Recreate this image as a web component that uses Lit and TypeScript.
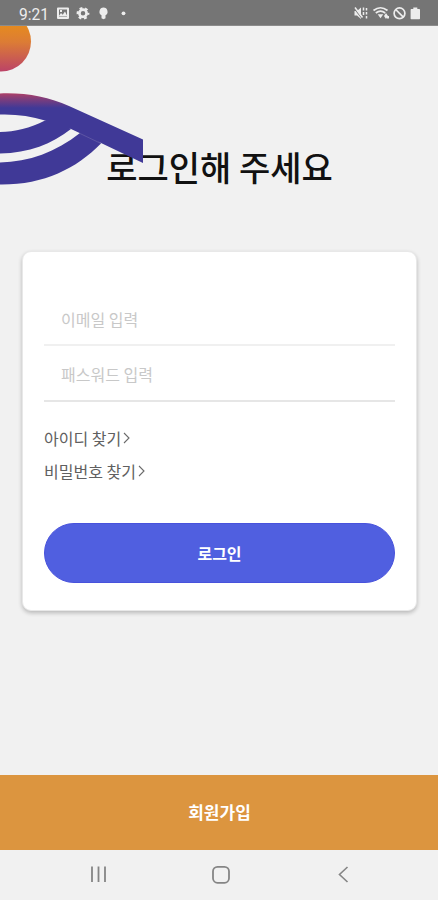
import { LitElement, html, css } from "lit";
import { customElement } from "lit/decorators.js";

@customElement("app-root")
export class AppRoot extends LitElement {
  static styles = css`
    :host {
      display: flex;
      flex-direction: column;
      position: relative;
      height: 900px;
      overflow: hidden;
      background: #f1f1f1;
      font-family: "Noto Sans CJK KR", "Noto Sans", sans-serif;
      color: #111;
    }
    * { box-sizing: border-box; }
    svg { display: block; }
    .status {
      height: 26px;
      flex: none;
      background: #757575;
      border-bottom: 1px solid #8c8c8c;
    }
    .art {
      position: absolute;
      left: 0;
      top: 26px;
      pointer-events: none;
    }
    .clock { font: 16.5px Roboto, sans-serif; }
    main { flex: 1; padding: 117px 21px 0 22px; }
    h1 {
      margin: 0;
      height: 48px;
      line-height: 48px;
      font-size: 34px;
      font-weight: 500;
      text-align: center;
      white-space: nowrap;
    }
    .card {
      margin-top: 60px;
      height: 360px;
      padding: 44px 21px 0 21px;
      background: #fff;
      border-radius: 9px;
      border: 1px solid #e8e8e8;
      box-shadow: 0 2px 4px rgba(0, 0, 0, 0.24);
    }
    .field {
      height: 50px;
      padding: 0 17px;
      line-height: 46px;
      font-size: 16px;
      font-weight: 400;
      color: #c8c8c8;
      border-bottom: 2px solid #f0f0f0;
    }
    .field + .field { height: 56px; line-height: 56px; border-bottom-color: #e6e6e6; }
    .links { padding-top: 19px; font-size: 16px; font-weight: 400; color: #606060; }
    .link { display: flex; align-items: center; height: 33px; }
    .link svg { margin-left: 2px; }
    .login {
      margin-top: 36px;
      height: 60px;
      display: flex;
      align-items: center;
      justify-content: center;
      border-radius: 30px;
      background: #505fe0;
      border: 1px solid #4852dc;
      color: #fff;
      font-size: 16px;
      font-weight: 700;
    }
    .join {
      flex: none;
      height: 75px;
      padding: 0 0 2px 1px;
      display: flex;
      align-items: center;
      justify-content: center;
      background: #dc953f;
      color: #fff;
      font-size: 17px;
      font-weight: 700;
    }
    .nav { flex: none; height: 50px; }
  `;

  private link(text: string) {
    return html`<div class="link"><span>${text}</span>
      <svg width="8" height="14" viewBox="0 0 8 14" fill="none" stroke="#6a6a6a" stroke-width="1.1"><path d="M1 2 6 7 1 12" /></svg></div>`;
  }

  render() {
    return html`
      <div class="status">
        <svg width="438" height="25" viewBox="0 0 438 25" fill="#ededed">
          <text class="clock" x="19" y="19.5" textLength="30" lengthAdjust="spacingAndGlyphs">9:21</text>
          <path fill-rule="evenodd" d="M58 7.500h10q1 0 1 1v9.500q0 1-1 1H58q-1 0-1-1V8.500q0-1 1-1Zm1 2v7.500h8V9.500Z" />
          <path d="m58.500 16.500 2.500-3.500 1.700 1.800 2.300-3.300 2.500 5ZM60 10h2v2h-2Z" />
          <circle cx="83" cy="13.300" r="3.600" fill="none" stroke="#ededed" stroke-width="2.700" />
          <circle cx="83" cy="13.300" r="5.300" fill="none" stroke="#ededed" stroke-width="2.200" stroke-dasharray="2.775 2.775" stroke-dashoffset="1.300" />
          <path d="M103.500 7.500a4.200 4.200 0 0 1 2 7.800v2.900l-2 1-2-1v-2.900a4.200 4.200 0 0 1 2-7.800Z" />
          <circle cx="123.500" cy="13.300" r="1.900" />
          <path d="M354.500 11h2.500l4-3.500v11.500l-4-3.500h-2.500Z" />
          <path d="m354 8 8 10.500" stroke="#757575" stroke-width="1.200" />
          <path d="m355 7.500 7.500 10M363.500 7.500v3M363.500 12v3M366.500 8v2.500M366.500 12v2.500M366.500 16v2.500" stroke="#ededed" stroke-width="1.500" />
          <g fill="none" stroke="#ededed" stroke-width="1.700">
            <path d="M373.500 10.500q7-5.500 14 0M375.800 13q4.700-3.600 9.400 0" />
            <circle cx="399.500" cy="13.300" r="5.400" />
            <path d="m395.700 9.500 7.600 7.600" />
          </g>
          <path d="m377.700 14.200 5.600 0-2.800 4ZM384 16l2-3 2 3-2 3ZM387 16h2v2.500h-2Z" />
          <path d="M413.300 7.500h4V9h2q.7 0 .7.800V18.500q0 .8-.7.800h-8q-.7 0-.7-.8V9.800q0-.8.700-.8h2Z" />
        </svg>
      </div>
      <main>
        <h1>로그인해 주세요</h1>
        <section class="card">
          <div class="field">이메일 입력</div>
          <div class="field">패스워드 입력</div>
          <div class="links">${this.link("아이디 찾기")}${this.link("비밀번호 찾기")}</div>
          <div class="login" role="button">로그인</div>
        </section>
      </main>
      <div class="join" role="button">회원가입</div>
      <div class="nav">
        <svg width="438" height="50" viewBox="0 0 438 50" fill="none" stroke="#858585" stroke-width="1.800">
          <path d="M92 16.500v15.500M98.500 16.500v15.500M105 16.500v15.500" />
          <rect x="213" y="16.800" width="16" height="16" rx="4.500" />
          <path d="m347.500 17-8 7.500 8 7.500" stroke-width="1.600" />
        </svg>
      </div>
      <svg class="art" width="160" height="170" viewBox="0 26 160 170">
        <defs>
          <linearGradient id="sun" gradientUnits="userSpaceOnUse" x1="0" y1="26" x2="0" y2="72">
            <stop offset="0" stop-color="#e58a20" />
            <stop offset="0.350" stop-color="#dc7c35" />
            <stop offset="1" stop-color="#bb4268" />
          </linearGradient>
          <linearGradient id="crest" gradientUnits="userSpaceOnUse" x1="0" y1="93" x2="0" y2="108">
            <stop offset="0" stop-color="#b04066" />
            <stop offset="0.350" stop-color="#843d79" />
            <stop offset="1" stop-color="#403997" />
          </linearGradient>
        </defs>
        <circle cx="1" cy="41.500" r="30" fill="url(#sun)" />
        <path fill="#403997" d="M0 132C15 132 30 128 45 120.500L55 119 71 129C52 144 29 153 0 153.500Z" />
        <path fill="#403997" d="M0 162.500C29 162 56 152 80 133L88 132 101 143.500C76 169 43 185 0 184.500Z" />
        <path fill="url(#crest)" d="M0 93.500C26 92.500 48 97 69 106L143 139.500V163L101 143 71 129 45 120.500C31 116 16 114 0 114.500Z" />
        <path d="m80 133.500 21 10" stroke="#6960a9" stroke-width="0.700" />
      </svg>
    `;
  }
}
